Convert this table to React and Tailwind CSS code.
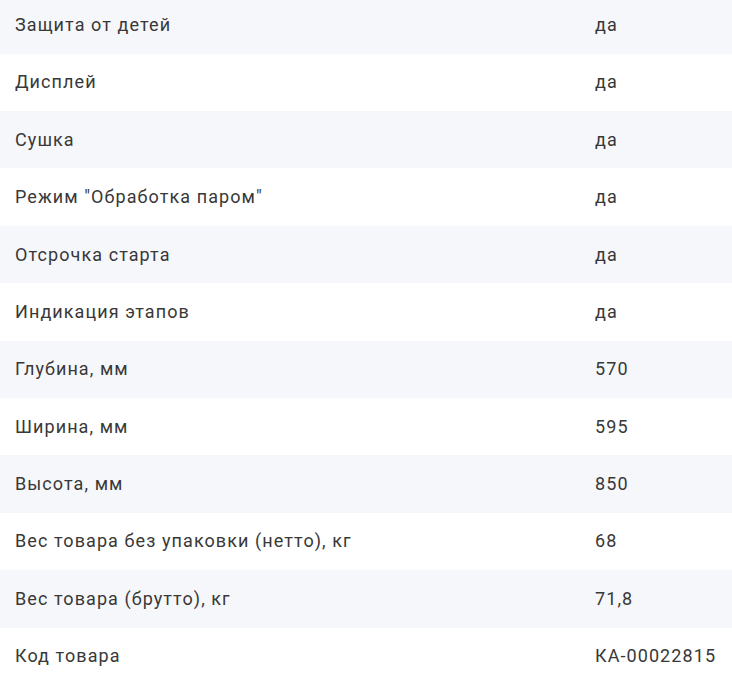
import React from "react";

const rows = [
  ["Защита от детей", "да"],
  ["Дисплей", "да"],
  ["Сушка", "да"],
  ['Режим "Обработка паром"', "да"],
  ["Отсрочка старта", "да"],
  ["Индикация этапов", "да"],
  ["Глубина, мм", "570"],
  ["Ширина, мм", "595"],
  ["Высота, мм", "850"],
  ["Вес товара без упаковки (нетто), кг", "68"],
  ["Вес товара (брутто), кг", "71,8"],
  ["Код товара", "КА-00022815"],
];

export default function App() {
  return (
    <div
      className="w-[732px] h-[683px] overflow-hidden bg-white text-[#383838]"
      style={{ fontFamily: "Roboto, 'Noto Sans', sans-serif" }}
    >
      <div className="-mt-[3.75px] flex flex-col">
        {rows.map(([k, v], i) => (
          <div
            key={i}
            className={
              i % 2 === 0
                ? "grid grid-cols-[595px_1fr] items-center h-[57.4px] bg-[#f6f7fb]"
                : "grid grid-cols-[595px_1fr] items-center h-[57.4px] bg-white"
            }
          >
            <div className="pl-[15px] text-[18px] leading-6 tracking-[0.06em]">{k}</div>
            <div className="text-[18px] leading-6 tracking-[0.06em]">{v}</div>
          </div>
        ))}
      </div>
    </div>
  );
}
